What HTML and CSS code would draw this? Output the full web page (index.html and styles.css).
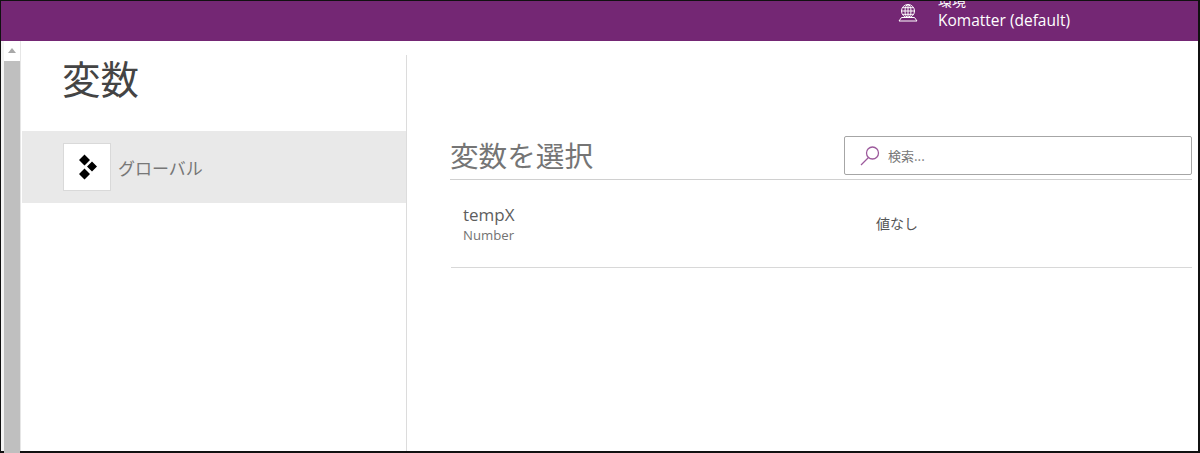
FILE: index.html
```html
<!DOCTYPE html>
<html lang="ja">
<head>
<meta charset="utf-8">
<title>変数</title>
<link rel="stylesheet" href="styles.css">
</head>
<body>
<div class="frame">
  <header class="topbar">
    <svg class="globe" width="20" height="20" viewBox="0 0 20 20" fill="none" stroke="#fff" stroke-width="1">
      <circle cx="10" cy="8" r="6.500"/>
      <ellipse cx="10" cy="8" rx="3" ry="6.500"/>
      <path d="M3.500 8h13M4.500 4.700h11M4.500 11.300h11M10 1.500v13M3.500 14.500L1 18h18l-2.500-3.500z"/>
    </svg>
    <div class="env">
      <div class="env-label">環境</div>
      <div class="env-name">Komatter (default)</div>
    </div>
  </header>
  <div class="body">
    <div class="scrollbar">
      <div class="arrow"></div>
      <div class="thumb"></div>
    </div>
    <aside class="sidebar">
      <h1 class="title">変数</h1>
      <div class="nav-item">
        <div class="nav-icon">
          <svg class="nav-glyph" width="20" height="26" viewBox="0 0 20 26" fill="#000">
            <path d="M6.500.500l5.500 5.500-5.500 5.500L1 6zM14 7.500l5 5-5 5-5-5zM6.500 14.500l5.500 5.500-5.500 5.500L1 20z"/>
          </svg>
        </div>
        <span class="nav-label">グローバル</span>
      </div>
    </aside>
    <main class="content">
      <div class="head">
        <h2 class="heading">変数を選択</h2>
        <div class="search">
          <svg width="22" height="22" viewBox="0 0 22 22" fill="none" stroke="#9c5a9c" stroke-width="1.300">
            <circle cx="13.500" cy="8" r="6"/>
            <path d="M9.500 12.500L2 20"/>
          </svg>
          <span class="placeholder">検索...</span>
        </div>
      </div>
      <div class="row">
        <div class="var">
          <div class="var-name">tempX</div>
          <div class="var-type">Number</div>
        </div>
        <div class="var-value">値なし</div>
      </div>
    </main>
  </div>
</div>
</body>
</html>
```
FILE: styles.css
```css
* { box-sizing: border-box; }
html, body { margin: 0; padding: 0; height: 100%; overflow: hidden; }
body { font-family: "Open Sans", "Noto Sans CJK JP", sans-serif; background: #fff; }
.frame {
  width: 1200px; height: 453px;
  border: solid #111; border-width: 1px 2px 2px 1px;
  display: flex; flex-direction: column;
}
.topbar {
  height: 40px; flex: none; background: #742774; color: #fff;
  display: flex; align-items: flex-start; padding-left: 897px; overflow: hidden;
}
.globe { margin-top: 2px; flex: none; }
.env { margin-left: 20px; margin-top: -10px; }
.env-label { font-size: 14px; line-height: 18px; font-family: "Noto Sans CJK JP", sans-serif; }
.env-name { font-size: 15.500px; line-height: 20px; margin-top: 1px; white-space: nowrap; }
.body { flex: 1; display: flex; min-height: 0; }
.scrollbar { width: 21px; flex: none; padding: 7px 0 0 3px; background: linear-gradient(to right, #f4f4f4 3px, #fff 3px, #fff 19px, #e6e6e6 19px, #e6e6e6 20px, #fff 20px); }
.arrow {
  width: 0; height: 0; margin-left: 4px;
  border: solid transparent; border-width: 0 4px 5px; border-bottom-color: #a8a8a8;
}
.thumb { width: 16px; height: 400px; margin-top: 8px; background: #bfbfbf; }
.sidebar { width: 385px; flex: none; border-right: 1px solid #dcdcdc; margin-top: 14px; }
.title {
  margin: 0; padding: 0 0 0 40px; height: 76px;
  font: 400 38.500px/44px "Noto Sans CJK JP", sans-serif; color: #444;
}
.nav-item {
  height: 72px; background: #e9e9e9;
  display: flex; align-items: center; padding-left: 41px; gap: 7px;
}
.nav-icon {
  width: 48px; height: 48px; background: #fff; border: 1px solid #d9d9d9;
  display: flex; align-items: center; justify-content: center;
}
.nav-glyph { margin-left: 1px; }
.nav-label { font: 400 17px/24px "Noto Sans CJK JP", sans-serif; color: #777; margin-top: 2px; }
.content { flex: 1; padding: 95px 6px 0 43px; min-width: 0; }
.head {
  height: 44px; border-bottom: 1px solid #d0d0d0;
  display: flex; justify-content: space-between; align-items: flex-start;
}
.heading {
  margin: 0; font: 400 28.600px/38px "Noto Sans CJK JP", sans-serif; color: #757575;
}
.search {
  width: 348px; height: 39px; border: 1px solid #a6a6a6; border-radius: 2px; background: #fff;
  display: flex; align-items: center; padding-left: 14px; gap: 7px;
}
.placeholder { font: 400 13px/18px "Noto Sans CJK JP", sans-serif; color: #777; }
.row {
  height: 88px; margin-left: 1px; border-bottom: 1px solid #d8d8d8;
  display: flex; align-items: center; padding-left: 12px; color: #666;
}
.var { width: 413px; margin-top: 2px; }
.var-name { font-size: 17px; line-height: 20px; color: #5e5e5e; }
.var-type { font-size: 13.200px; line-height: 20px; color: #737373; }
.var-value { font: 400 14px/20px "Noto Sans CJK JP", sans-serif; color: #555; margin-top: -2px; }
```
